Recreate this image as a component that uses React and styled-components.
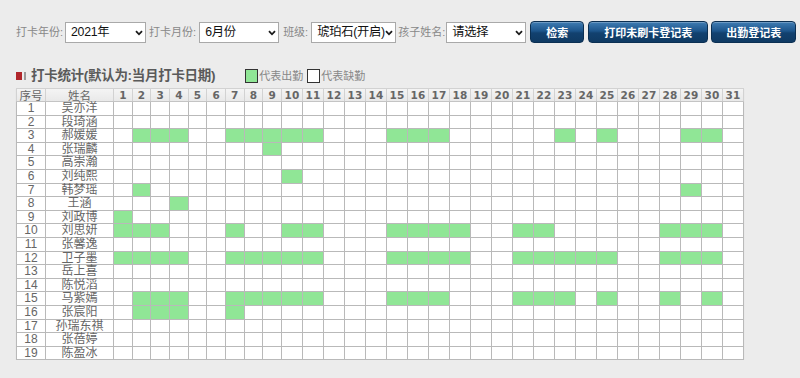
import React from "react";
import styled, { createGlobalStyle } from "styled-components";

const GlobalStyle = createGlobalStyle`
  html, body { margin: 0; padding: 0; background: #ececec; }
  body { font-family: "Liberation Sans", "Noto Sans CJK SC", sans-serif; color: #555; }
`;

const Page = styled.div`
  padding: 21px 0 0 16px;
  width: 800px;
  box-sizing: border-box;
`;

const Toolbar = styled.div`
  display: flex;
  align-items: center;
  height: 22px;
`;

const Label = styled.span`
  font-family: "Liberation Sans", "Noto Sans CJK SC", sans-serif;
  font-size: 11px;
  line-height: 14px;
  color: #888;
  margin: 0 ${(p) => (p.$after ?? 2)}px 0 ${(p) => p.$gap || 0}px;
  white-space: nowrap;
`;

const SelectBox = styled.span`
  position: relative;
  display: inline-flex;
  width: ${(p) => p.$w}px;
  height: 21px;
`;

const Select = styled.select`
  appearance: none;
  -webkit-appearance: none;
  width: 100%;
  height: 100%;
  border: 1px solid #a9a9a9;
  border-radius: 0;
  background: #fff;
  color: #111;
  font-family: "Liberation Sans", "Noto Sans CJK SC", sans-serif;
  font-size: 12.3px;
  letter-spacing: -0.3px;
  padding: 0 9px 0 5px;
  box-sizing: border-box;
  outline: none;
  white-space: nowrap;
`;

const Chevron = styled.svg`
  position: absolute;
  right: 3px;
  top: 8px;
  width: 8px;
  height: 6px;
  pointer-events: none;
`;

const Dropdown = ({ w, children, value }) => (
  <SelectBox $w={w}>
    <Select defaultValue={value}>{children}</Select>
    <Chevron viewBox="0 0 8 6">
      <path d="M1 1.2 L4 4.3 L7 1.2" fill="none" stroke="#1a1a1a" strokeWidth="1.8" />
    </Chevron>
  </SelectBox>
);

const Button = styled.button`
  width: ${(p) => p.$w}px;
  height: 22px;
  margin-left: ${(p) => p.$gap}px;
  border: 1px solid #0b2f52;
  border-radius: 4px;
  background: linear-gradient(#3f7cb3 0%, #1d558b 45%, #12416f 55%, #0f3a63 100%);
  color: #fff;
  font-family: "Noto Sans CJK SC", sans-serif;
  font-size: 11px;
  font-weight: bold;
  padding: 0;
  box-sizing: border-box;
  box-shadow: inset 0 1px 0 rgba(255,255,255,0.25);
`;

const TitleRow = styled.div`
  display: flex;
  align-items: center;
  margin-top: 24px;
  height: 18px;
`;

const Marker = styled.span`
  width: 6px;
  height: 8px;
  background: #b0262b;
`;

const MarkerBar = styled.span`
  width: 2px;
  height: 8px;
  background: #9a9a9a;
  margin-left: 2px;
`;

const Title = styled.h2`
  margin: 0 0 0 5px;
  font-family: "Liberation Sans", "Noto Sans CJK SC", sans-serif;
  font-size: 13.5px;
  font-weight: bold;
  color: #5a5a5a;
  letter-spacing: -0.3px;
  line-height: 18px;
  white-space: nowrap;
`;

const Legend = styled.span`
  display: flex;
  align-items: center;
  margin-left: ${(p) => p.$gap}px;
  font-size: 11px;
  line-height: 14px;
  color: #888;
  white-space: nowrap;
`;

const Swatch = styled.span`
  width: 11px;
  height: 12px;
  border: 1px solid #333;
  background: ${(p) => (p.$on ? "#90e696" : "#fff")};
  margin-right: 1px;
`;

const Table = styled.table`
  margin-top: 3px;
  border-collapse: collapse;
  table-layout: fixed;
  width: 727px;
  background: #fff;
  border: 1px solid #b4b4b4;
  box-shadow: 0 1px 1px rgba(0,0,0,0.08);
`;

const Col = styled.col`
  width: ${(p) => p.$w}px;
`;

const HeadRow = styled.tr`
  height: 13px;
  background: linear-gradient(#f4f4f4, #e8e8e8);
`;

const HeadCell = styled.th`
  padding: 0;
  border: 1px solid #d2d2d2;
  border-bottom: 1px solid #c4c4c4;
  font-size: ${(p) => (p.$num ? "10.5px" : "11.5px")};
  font-family: ${(p) => (p.$num ? '"DejaVu Sans", sans-serif' : '"Noto Sans CJK SC", sans-serif')};
  font-weight: ${(p) => (p.$num ? "bold" : "normal")};
  color: #666;
  line-height: 11px;
  text-align: center;
  white-space: nowrap;
`;

const Row = styled.tr`
  height: 13.6px;
`;

const Cell = styled.td`
  padding: 0;
  border: 1px solid #b9b9b9;
  background: ${(p) => (p.$on ? "#90e696" : "#fff")};
  font-family: "Liberation Sans", "Noto Sans CJK SC", sans-serif;
  font-size: 12px;
  line-height: 12.5px;
  color: #666;
  text-align: center;
  white-space: nowrap;
`;

const students = [
  "吴亦洋", "段琦涵", "郝媛媛", "张瑞麟", "高崇瀚", "刘纯熙", "韩梦瑶", "王涵",
  "刘政博", "刘思妍", "张馨逸", "卫子墨", "岳上喜", "陈悦滔", "马紫嫣", "张宸阳",
  "孙瑞东祺", "张蓓婷", "陈盈冰",
];

const attendance = {
  3: [2, 3, 4, 7, 8, 9, 10, 11, 15, 16, 17, 23, 25, 29, 30],
  4: [9],
  6: [10],
  7: [2, 29],
  8: [4],
  9: [1],
  10: [1, 2, 3, 7, 10, 11, 15, 16, 17, 18, 21, 22, 28, 29, 30],
  12: [1, 2, 3, 4, 7, 8, 9, 10, 11, 15, 16, 17, 18, 21, 22, 23, 24, 25, 28, 29, 30],
  15: [2, 3, 4, 7, 8, 9, 10, 11, 15, 16, 17, 21, 22, 23, 25, 28, 30],
  16: [2, 3, 4, 7],
};

const days = Array.from({ length: 31 }, (_, i) => i + 1);

export default function App() {
  return (
    <>
      <GlobalStyle />
      <Page>
        <Toolbar>
          <Label>打卡年份:</Label>
          <Dropdown w={81} value="2021">
            <option value="2021">2021年</option>
          </Dropdown>
          <Label $gap={3} $after={3}>打卡月份:</Label>
          <Dropdown w={80} value="6">
            <option value="6">6月份</option>
          </Dropdown>
          <Label $gap={4} $after={3}>班级:</Label>
          <Dropdown w={85} value="a">
            <option value="a">琥珀石(开启)</option>
          </Dropdown>
          <Label $gap={2} $after={1}>孩子姓名:</Label>
          <Dropdown w={80} value="">
            <option value="">请选择</option>
          </Dropdown>
          <Button $w={54} $gap={4}>检索</Button>
          <Button $w={120} $gap={4}>打印未刷卡登记表</Button>
          <Button $w={85} $gap={3}>出勤登记表</Button>
        </Toolbar>

        <TitleRow>
          <Marker />
          <MarkerBar />
          <Title>打卡统计(默认为:当月打卡日期)</Title>
          <Legend $gap={30}>
            <Swatch $on />
            代表出勤
          </Legend>
          <Legend $gap={4}>
            <Swatch />
            代表缺勤
          </Legend>
        </TitleRow>

        <Table>
          <colgroup>
            <Col $w={29} />
            <Col $w={68} />
            {days.map((d) => (
              <Col key={d} $w={d <= 9 ? 18.67 : 21} />
            ))}
          </colgroup>
          <thead>
            <HeadRow>
              <HeadCell>序号</HeadCell>
              <HeadCell>姓名</HeadCell>
              {days.map((d) => (
                <HeadCell key={d} $num>
                  {d}
                </HeadCell>
              ))}
            </HeadRow>
          </thead>
          <tbody>
            {students.map((name, i) => {
              const n = i + 1;
              const on = attendance[n] || [];
              return (
                <Row key={n}>
                  <Cell>{n}</Cell>
                  <Cell>{name}</Cell>
                  {days.map((d) => (
                    <Cell key={d} $on={on.includes(d)} />
                  ))}
                </Row>
              );
            })}
          </tbody>
        </Table>
      </Page>
    </>
  );
}
